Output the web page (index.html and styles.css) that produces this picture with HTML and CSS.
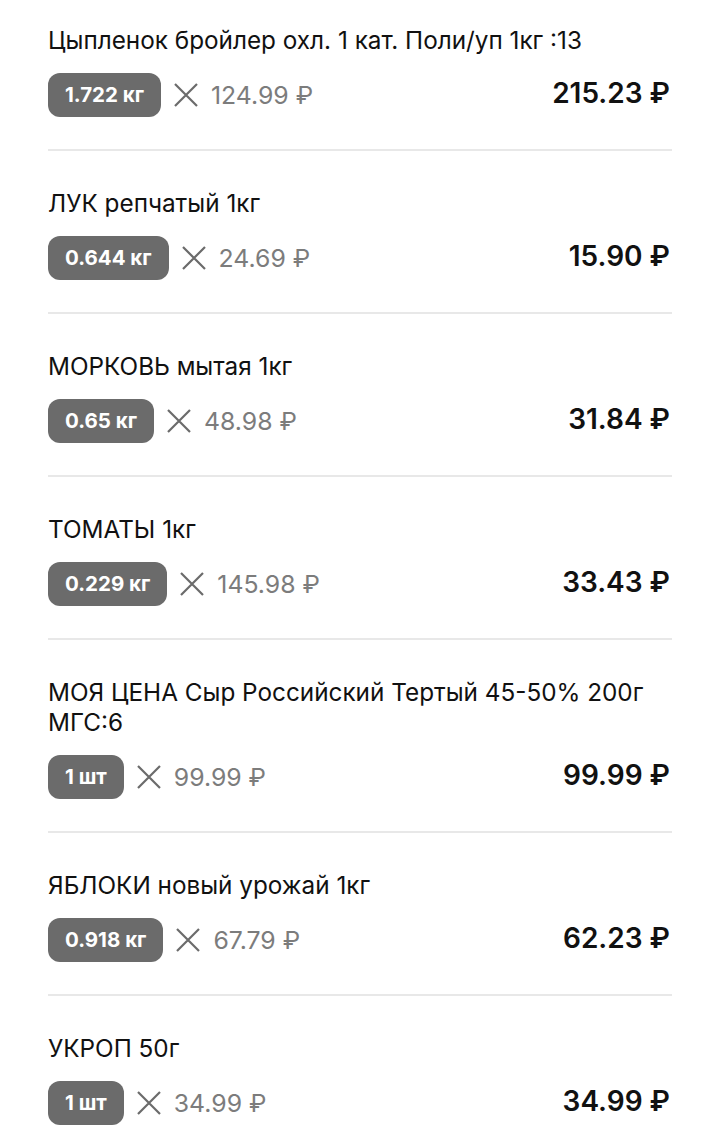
FILE: index.html
```html
<!DOCTYPE html>
<html lang="ru">
<head>
<meta charset="utf-8">
<link rel="stylesheet" href="styles.css">
</head>
<body>
<div class="list">
  <div class="item">
    <div class="title">Цыпленок бройлер охл. 1 кат. Поли/уп 1кг :13</div>
    <div class="row">
      <span class="qty">1.722 кг</span>
      <svg class="x" viewBox="0 0 26 26"><path d="M2 2L24 24M24 2L2 24"/></svg>
      <span class="unit">124.99 ₽</span>
      <span class="total">215.23 ₽</span>
    </div>
  </div>
  <div class="item">
    <div class="title">ЛУК репчатый 1кг</div>
    <div class="row">
      <span class="qty">0.644 кг</span>
      <svg class="x" viewBox="0 0 26 26"><path d="M2 2L24 24M24 2L2 24"/></svg>
      <span class="unit">24.69 ₽</span>
      <span class="total">15.90 ₽</span>
    </div>
  </div>
  <div class="item">
    <div class="title">МОРКОВЬ мытая 1кг</div>
    <div class="row">
      <span class="qty">0.65 кг</span>
      <svg class="x" viewBox="0 0 26 26"><path d="M2 2L24 24M24 2L2 24"/></svg>
      <span class="unit">48.98 ₽</span>
      <span class="total">31.84 ₽</span>
    </div>
  </div>
  <div class="item">
    <div class="title">ТОМАТЫ 1кг</div>
    <div class="row">
      <span class="qty">0.229 кг</span>
      <svg class="x" viewBox="0 0 26 26"><path d="M2 2L24 24M24 2L2 24"/></svg>
      <span class="unit">145.98 ₽</span>
      <span class="total">33.43 ₽</span>
    </div>
  </div>
  <div class="item">
    <div class="title">МОЯ ЦЕНА Сыр Российский Тертый 45-50% 200г МГС:6</div>
    <div class="row">
      <span class="qty">1 шт</span>
      <svg class="x" viewBox="0 0 26 26"><path d="M2 2L24 24M24 2L2 24"/></svg>
      <span class="unit">99.99 ₽</span>
      <span class="total">99.99 ₽</span>
    </div>
  </div>
  <div class="item">
    <div class="title">ЯБЛОКИ новый урожай 1кг</div>
    <div class="row">
      <span class="qty">0.918 кг</span>
      <svg class="x" viewBox="0 0 26 26"><path d="M2 2L24 24M24 2L2 24"/></svg>
      <span class="unit">67.79 ₽</span>
      <span class="total">62.23 ₽</span>
    </div>
  </div>
  <div class="item">
    <div class="title">УКРОП 50г</div>
    <div class="row">
      <span class="qty">1 шт</span>
      <svg class="x" viewBox="0 0 26 26"><path d="M2 2L24 24M24 2L2 24"/></svg>
      <span class="unit">34.99 ₽</span>
      <span class="total">34.99 ₽</span>
    </div>
  </div>
</div>
</body>
</html>
```
FILE: styles.css
```css
html, body {
  margin: 0;
  padding: 0;
  background: #ffffff;
}
body {
  font-family: "Inter", "Roboto", "Liberation Sans", sans-serif;
  color: #111111;
}
.list {
  padding: 0 48px;
  width: 624px;
}
.item {
  padding: 37px 0 32px;
  border-bottom: 2px solid #e8e8e8;
}
.item:first-child {
  padding-top: 25px;
}
.title {
  font-size: 24.3px;
  line-height: 30px;
  padding-right: 20px;
}
.row {
  display: flex;
  align-items: center;
  margin-top: 18px;
  height: 44px;
}
.qty {
  background: #6b6b6b;
  color: #ffffff;
  font-weight: 700;
  font-size: 20.5px;
  height: 44px;
  line-height: 44px;
  padding: 0 17px;
  border-radius: 12px;
}
.x {
  width: 26px;
  height: 26px;
  margin-left: 12px;
  fill: none;
  stroke: #6b6b6b;
  stroke-width: 2.2;
}
.unit {
  margin-left: 12px;
  font-size: 24.8px;
  color: #7c7c7c;
}
.total {
  margin-left: auto;
  margin-right: 2px;
  margin-bottom: 4px;
  font-size: 28px;
  font-weight: 600;
  color: #111111;
}
```
